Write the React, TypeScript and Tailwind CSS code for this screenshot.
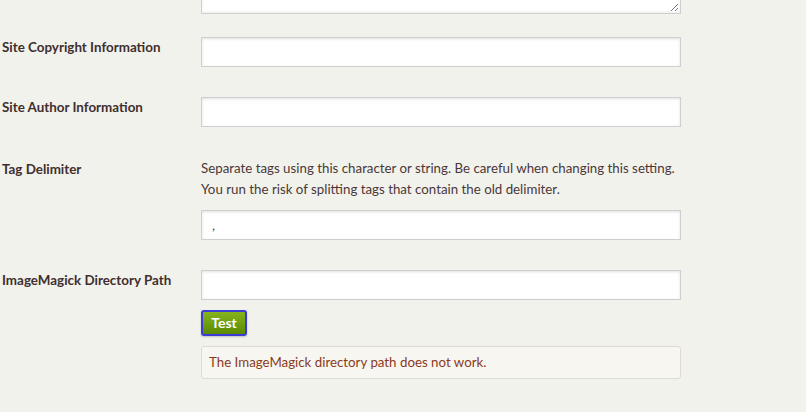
const font = { fontFamily: "Lato, 'Open Sans', sans-serif" };

function Row({ label, children, className = "" }: { label: string; children: React.ReactNode; className?: string }) {
  return (
    <div className={`flex ${className}`}>
      <div className="w-[201px] shrink-0 pl-[2px] pt-[1px] text-[13.4px] font-bold leading-[18px] text-[#3f2f2f]">{label}</div>
      <div className="w-[480px]">{children}</div>
    </div>
  );
}

function Field({ value = "" }: { value?: string }) {
  return (
    <input
      readOnly
      value={value}
      className="block h-[30px] w-[480px] border border-[#cfcfcf] bg-white px-[10px] text-[13px] text-[#444] shadow-[inset_0_1px_3px_rgba(0,0,0,0.12)] outline-none"
    />
  );
}

export default function App() {
  return (
    <div style={font} className="h-[412px] w-[806px] overflow-hidden bg-[#f2f2ec]">
      <div className="flex">
        <div className="w-[201px]" />
        <div className="relative h-[14px] w-[480px] border-x border-b border-[#cfcfcf] bg-white shadow-[inset_0_-1px_3px_rgba(0,0,0,0.08)]">
          <svg className="absolute bottom-[1px] right-[1px]" width="9" height="9" viewBox="0 0 9 9">
            <path d="M8 1 L1 8 M8 5 L5 8" stroke="#777" strokeWidth="1" />
          </svg>
        </div>
      </div>
      <Row label="Site Copyright Information" className="mt-[23px]">
        <Field />
      </Row>
      <Row label="Site Author Information" className="mt-[30px]">
        <Field />
      </Row>
      <Row label="Tag Delimiter" className="mt-[32px]">
        <p className="mt-[-1px] whitespace-nowrap text-[13.3px] leading-[21px] text-[#4a3838]">
          Separate tags using this character or string. Be careful when changing this setting.
          <br />
          You run the risk of splitting tags that contain the old delimiter.
        </p>
        <div className="mt-[10px]">
          <Field value="," />
        </div>
      </Row>
      <Row label="ImageMagick Directory Path" className="mt-[30px]">
        <Field />
        <button className="mt-[10px] block h-[26px] w-[46px] rounded-[3px] border-2 border-[#3b3bd6] bg-gradient-to-b from-[#86b41e] to-[#5a8a00] text-[14px] font-bold leading-none text-white shadow-[0_1px_2px_rgba(0,0,0,0.2)]">
          Test
        </button>
        <div className="mt-[10px] rounded-[3px] border border-[#dedbd3] bg-[#f7f6f1] px-[7px] py-[6px] text-[13.3px] leading-[19px] text-[#8a3a1a]">
          The ImageMagick directory path does not work.
        </div>
      </Row>
    </div>
  );
}
